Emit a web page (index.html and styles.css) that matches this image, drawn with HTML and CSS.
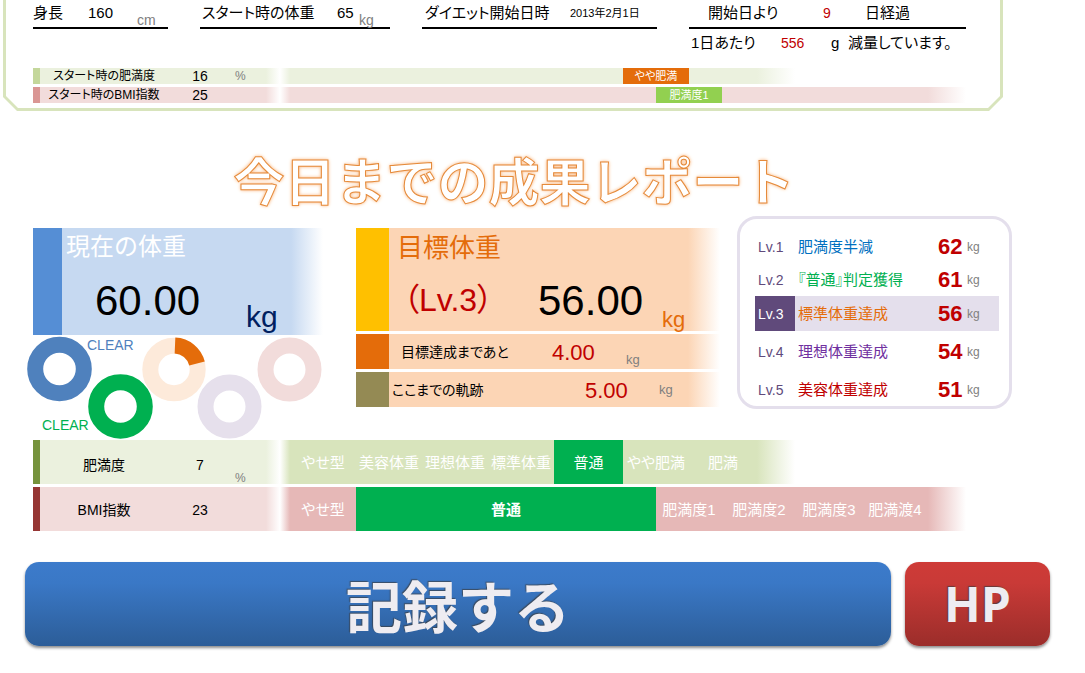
FILE: index.html
```html
<!DOCTYPE html>
<html lang="ja">
<head>
<meta charset="utf-8">
<meta name="viewport" content="width=device-width, initial-scale=1">
<title>今日までの成果レポート</title>
<link rel="stylesheet" href="styles.css">
</head>
<body>
<main class="page">
  <section class="frame">
    <div class="frame-inner">
      <div class="facts">
        <div class="fact fact-height">
          <span>身長</span><span>160</span><span class="unit">cm</span>
        </div>
        <div class="fact fact-start">
          <span>スタート時の体重</span><span>65</span><span class="unit">kg</span>
        </div>
        <div class="fact fact-date">
          <span>ダイエット開始日時</span><time class="date" datetime="2013-02-01">2013年2月1日</time>
        </div>
        <div class="fact fact-days">
          <span>開始日より</span><span class="hot">9</span><span>日経過</span>
        </div>
        <div class="fact-pace">
          <span>1日あたり</span><span class="hot">556</span><span>g</span><span>減量しています。</span>
        </div>
      </div>
      <div class="bands bands-start">
        <div class="band band-fat pale">
          <div class="band-label"><span>スタート時の肥満度</span><span class="num">16</span><span class="pct">%</span></div>
          <div class="scale scale-fat"><span class="chip chip-orange">やや肥満</span></div>
        </div>
        <div class="band band-bmi pale">
          <div class="band-label"><span>スタート時のBMI指数</span><span class="num">25</span></div>
          <div class="scale scale-start-bmi"><span class="chip chip-lime">肥満度1</span></div>
        </div>
      </div>
    </div>
  </section>

  <h1 class="title">今日までの成果レポート</h1>

  <div class="overview">
    <section class="current">
      <div class="card-current">
        <h2>現在の体重</h2>
        <p class="reading"><span class="big">60.00</span><span class="kg">kg</span></p>
      </div>
      <svg class="rings" width="296" height="105" viewBox="0 0 296 105" role="img" aria-label="レベル達成状況">
        <g fill="none" stroke-width="16">
          <circle cx="33.5" cy="34" r="24.3" stroke="#4f81bd"/>
          <circle cx="94.5" cy="71.5" r="24.3" stroke="#00b050"/>
          <circle cx="148" cy="34.5" r="23.7" stroke="#fdeada"/>
          <path d="M149 10.5A23.7 23.7 0 0 1 171 28.5" stroke="#e46c0a"/>
          <circle cx="203.5" cy="71.5" r="24" stroke="#e6e0ec"/>
          <circle cx="263.5" cy="34.5" r="24" stroke="#f2dcdb"/>
        </g>
        <text class="clear clear-blue" x="61" y="15">CLEAR</text>
        <text class="clear clear-green" x="16" y="95">CLEAR</text>
      </svg>
    </section>

    <section class="target">
      <div class="goal goal-main">
        <h2>目標体重</h2>
        <p class="reading"><span class="level">（Lv.3）</span><span class="big">56.00</span><span class="kg">kg</span></p>
      </div>
      <div class="goal goal-left">
        <p><span>目標達成まであと</span><span class="mid">4.00</span><span class="unit">kg</span></p>
      </div>
      <div class="goal goal-done">
        <p><span>ここまでの軌跡</span><span class="mid">5.00</span><span class="unit">kg</span></p>
      </div>
    </section>

    <section class="levels">
      <table>
        <tr class="lv1"><th scope="row">Lv.1</th><td class="name">肥満度半減</td><td class="goal-num">62</td><td class="small">kg</td></tr>
        <tr class="lv2"><th scope="row">Lv.2</th><td class="name">『普通』判定獲得</td><td class="goal-num">61</td><td class="small">kg</td></tr>
        <tr class="lv3"><th scope="row">Lv.3</th><td class="name">標準体重達成</td><td class="goal-num">56</td><td class="small">kg</td></tr>
        <tr class="lv4"><th scope="row">Lv.4</th><td class="name">理想体重達成</td><td class="goal-num">54</td><td class="small">kg</td></tr>
        <tr class="lv5"><th scope="row">Lv.5</th><td class="name">美容体重達成</td><td class="goal-num">51</td><td class="small">kg</td></tr>
      </table>
    </section>
  </div>

  <section class="bands bands-now">
    <div class="band band-fat">
      <div class="band-label"><span>肥満度</span><span class="num">7</span><span class="pct">%</span></div>
      <div class="scale scale-fat">
        <span>やせ型</span><span>美容体重</span><span>理想体重</span><span>標準体重</span><span class="hit">普通</span><span>やや肥満</span><span>肥満</span>
      </div>
    </div>
    <div class="band band-bmi">
      <div class="band-label"><span>BMI指数</span><span class="num">23</span></div>
      <div class="scale scale-bmi">
        <span>やせ型</span><strong class="hit">普通</strong><span>肥満度1</span><span>肥満度2</span><span>肥満度3</span><span>肥満渡4</span>
      </div>
    </div>
  </section>

  <div class="actions">
    <button type="button" class="btn btn-record">記録する</button>
    <button type="button" class="btn btn-hp">HP</button>
  </div>
</main>
</body>
</html>
```
FILE: styles.css
```css
* {
  box-sizing: border-box;
}

body {
  margin: 0;
  background: #fff;
  color: #000;
  font-family: "Liberation Sans", "Noto Sans CJK JP", sans-serif;
  font-size: 15px;
  font-feature-settings: "palt";
  line-height: 20px;
}

h1, h2, p {
  margin: 0;
  font-weight: 400;
}

span, time, th, td, h1, h2 {
  white-space: nowrap;
}

.unit, .pct, .small {
  color: #808080;
}

/* Profile frame with cut corners */
.frame {
  margin: 0 82px 0 3px;
  padding: 0 3px 3px;
  background: #d8e4bc;
  clip-path: polygon(0 0, 100% 0, 100% calc(100% - 14px), calc(100% - 14px) 100%, 14px 100%, 0 calc(100% - 14px));
}

.frame-inner {
  padding: 0 34px 5px 27px;
  background: #fff;
  clip-path: polygon(0 0, 100% 0, 100% calc(100% - 12px), calc(100% - 12px) 100%, 12px 100%, 0 calc(100% - 12px));
}

.facts {
  display: grid;
  grid-template-columns: 135fr 190fr 235fr 277fr;
  column-gap: 32px;
}

.fact {
  display: grid;
  align-items: start;
  height: 29px;
  padding-top: 3px;
  border-bottom: 2px solid #000;
}

.fact .unit {
  padding-top: 7px;
  font-size: 14px;
}

.fact-height {
  grid-template-columns: 55px 49px 1fr;
}

.fact-start {
  grid-template-columns: 135px 22px 1fr;
  padding-left: 2px;
}

.fact-date {
  grid-template-columns: 145px 1fr;
  padding-left: 3px;
}

.date {
  font-size: 11px;
}

.fact-days {
  grid-template-columns: 115px 42px 1fr;
  padding-left: 19px;
}

.hot {
  color: #c00000;
  font-size: 14px;
}

.fact-pace {
  display: grid;
  grid-column: 4;
  grid-template-columns: 90px 50px 17px 1fr;
  padding: 4px 0 0 2px;
}

/* Indicator bands */
.bands {
  display: grid;
  gap: 3px;
}

.bands-start {
  padding-top: 15px;
}

.bands-now {
  margin: 0 119px 0 33px;
}

.band {
  display: grid;
  color: #fff;
}

.band-fat {
  --mark: #76933c;
  --light: #ebf1de;
  --tone: #d8e4bc;
  grid-template-columns: 247fr 515fr 171fr;
}

.band-bmi {
  --mark: #963634;
  --light: #f2dcdb;
  --tone: #e6b8b7;
  grid-template-columns: 247fr 686fr;
}

.band-fat.pale {
  --mark: #c4d79b;
  --tone: #ebf1de;
}

.band-bmi.pale {
  --mark: #da9694;
  --tone: #f2dcdb;
}

.band-label {
  display: grid;
  grid-template-columns: 128fr 64fr 48fr;
  align-items: center;
  min-width: 0;
  height: 44px;
  padding-top: 2px;
  border-left: 7px solid var(--mark);
  background: linear-gradient(to right, var(--light) calc(100% - 14px), #fff);
  color: #000;
  font-size: 14px;
  text-align: center;
}

.band-label .pct {
  padding: 26px 0 0 3px;
  font-size: 12px;
  text-align: left;
}

.scale {
  display: grid;
  align-items: stretch;
  min-width: 0;
  background: linear-gradient(to right, #fff, var(--tone) 10px, var(--tone) calc(100% - 38px), #fff);
  line-height: 46px;
  text-align: center;
}

.scale-fat {
  grid-template-columns: 76fr 66fr 66fr 66fr 69fr 66fr 68fr 38fr;
}

.scale > * {
  min-width: 0;
  height: 44px;
}

.scale > :first-child {
  padding-left: 10px;
}

.scale-bmi {
  grid-template-columns: 76fr 300fr 66fr 74fr 66fr 66fr 38fr;
}

.scale-start-bmi {
  grid-template-columns: 376fr 66fr 244fr;
}

.hit {
  background: #00b050;
}

.pale .band-label,
.pale .scale,
.pale .chip {
  height: 16px;
  line-height: 16px;
}

.pale .band-label {
  padding-top: 0;
  font-size: 12px;
}

.pale .num {
  font-size: 14px;
}

.pale .pct {
  padding-top: 0;
}

.pale .scale > .chip {
  padding: 0;
  font-size: 11px;
}

.chip-orange {
  grid-column: 6;
  background: #e46c0a;
}

.chip-lime {
  grid-column: 2;
  background: #92d050;
}

/* Report title */
.title {
  margin: 43px 57px 2px 0;
  color: #fff;
  font-size: 51px;
  font-weight: 700;
  font-feature-settings: normal;
  line-height: 60px;
  text-align: center;
  -webkit-text-stroke: 1px #e58a3a;
  text-shadow: 0 0 3px #fac090, 0 0 4px #fac090;
}

/* Weight overview */
.overview {
  display: grid;
  grid-template-columns: 297fr 33fr 364fr 17fr 275fr;
  align-items: start;
  margin: 0 73px 0 26px;
}

.overview > * {
  min-width: 0;
}

.current {
  grid-column: 1;
  padding-top: 12px;
}

.card-current {
  height: 107px;
  margin-left: 7px;
  padding: 7px 0 0 4px;
  border-left: 29px solid #558ed5;
  background: linear-gradient(to right, #c6d9f1 calc(100% - 32px), #fff);
}

.card-current h2 {
  color: #fff;
  font-size: 24px;
  font-feature-settings: normal;
  line-height: 24px;
}

.reading {
  display: flex;
  align-items: flex-start;
}

.big {
  font-size: 42px;
  line-height: 48px;
}

.card-current .reading {
  padding: 18px 0 0 29px;
}

.card-current .kg {
  padding: 25px 0 0 46px;
  color: #002060;
  font-size: 30px;
  line-height: 30px;
}

.rings {
  display: block;
  overflow: visible;
}

.clear {
  font-size: 14px;
}

.clear-blue {
  fill: #4f81bd;
}

.clear-green {
  fill: #00b050;
}

.target {
  display: grid;
  grid-column: 3;
  gap: 3px;
  padding-top: 12px;
}

.goal {
  border-left: 33px solid;
  background: linear-gradient(to right, #fcd5b5 calc(100% - 32px), #fff);
}

.goal-main {
  height: 103px;
  padding: 7px 0 0 8px;
  border-color: #ffc000;
}

.goal-main h2 {
  color: #e46c0a;
  font-size: 26px;
  font-feature-settings: normal;
  line-height: 26px;
}

.goal-main .reading {
  padding-top: 16px;
}

.level {
  width: 141px;
  padding-left: 6px;
  color: #c00000;
  font-size: 32px;
  line-height: 46px;
}

.goal-main .kg {
  padding: 32px 0 0 19px;
  color: #e46c0a;
  font-size: 22px;
  line-height: 22px;
}

.goal-left {
  border-color: #e46c0a;
}

.goal-done {
  border-color: #948a54;
}

.goal-left p, .goal-done p {
  display: grid;
  align-items: center;
  height: 35px;
  font-size: 14px;
}

.goal-left p {
  grid-template-columns: 151px 74px 1fr;
  padding-left: 12px;
}

.goal-done p {
  grid-template-columns: 193px 74px 1fr;
  padding-left: 3px;
}

.goal .mid {
  padding-top: 2px;
  color: #c00000;
  font-size: 22px;
}

.goal .unit {
  font-size: 13px;
}

.goal-left .unit {
  padding-top: 16px;
}

/* Level list */
.levels {
  grid-column: 5;
  padding: 11px 10px 0 15px;
  border: 3px solid #e4dfec;
  border-radius: 20px;
}

.levels table {
  width: 100%;
  border-collapse: collapse;
  color: #604a7b;
}

.levels th, .levels td {
  padding: 0;
  font-weight: 400;
  text-align: left;
}

.levels th {
  width: 40px;
  padding-left: 3px;
  font-size: 14px;
}

.levels .name {
  padding-left: 3px;
}

.levels .goal-num {
  width: 29px;
  color: #c00000;
  font-size: 22px;
  font-weight: 700;
}

.levels .small {
  width: 32px;
  font-size: 12px;
}

.lv1 { height: 34px; }
.lv2 { height: 32px; }
.lv3 { height: 35px; }
.lv4 { height: 42px; }
.lv5 { height: 33px; }

.lv1 .name { color: #0070c0; }
.lv2 .name { color: #00b050; }
.lv3 .name { color: #e46c0a; }
.lv4 .name { color: #7030a0; }
.lv5 .name { color: #c00000; }

.lv3 {
  background: #e4dfec;
}

.lv3 th {
  background: #604a7b;
  color: #fff;
}

/* Buttons */
.actions {
  display: grid;
  grid-template-columns: 866fr 145fr;
  gap: 14px;
  margin: 31px 35px 24px 25px;
}

.btn {
  min-width: 0;
  padding: 0;
  border: 0;
  border-radius: 14px;
  color: #eeecf1;
  font-family: "Noto Sans CJK JP", sans-serif;
  font-size: 56px;
  font-weight: 700;
  line-height: 84px;
  box-shadow: 0 2px 3px rgba(0, 0, 0, 0.45);
  text-shadow: -1px -1px 1px rgba(60, 60, 60, 0.7);
}

.btn-record {
  background: linear-gradient(#3c7bcb 0%, #3a78c6 25%, #2c5d98 100%);
}

.btn-hp {
  background: linear-gradient(#ce3b37 0%, #c93a37 25%, #9b2d2a 100%);
  font-family: "Open Sans", sans-serif;
  font-size: 48px;
}
```
